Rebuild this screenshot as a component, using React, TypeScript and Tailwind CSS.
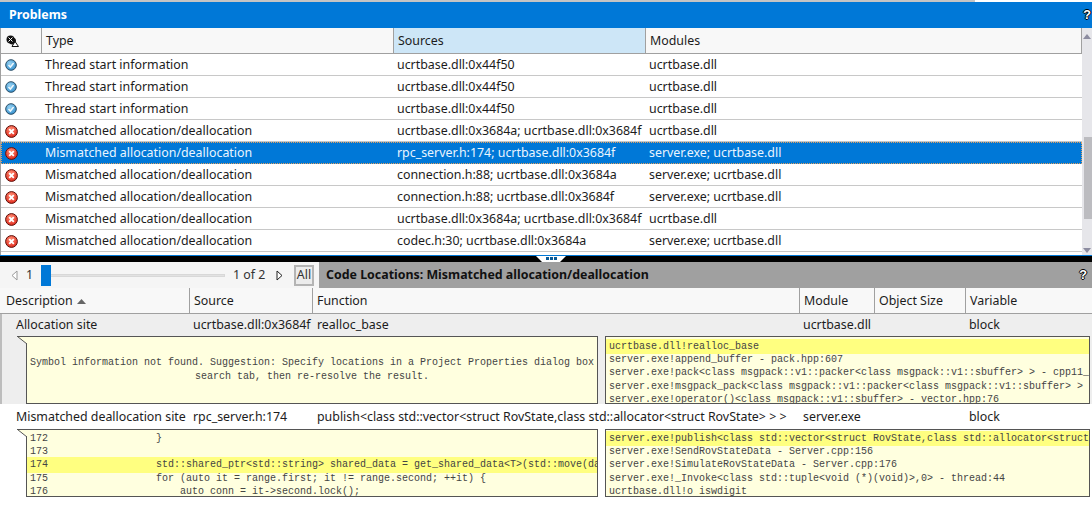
const uiFont = "[font-family:'Noto_Sans',sans-serif]";

const rows: [string, string, string, string][] = [
  ["info", "Thread start information", "ucrtbase.dll:0x44f50", "ucrtbase.dll"],
  ["info", "Thread start information", "ucrtbase.dll:0x44f50", "ucrtbase.dll"],
  ["info", "Thread start information", "ucrtbase.dll:0x44f50", "ucrtbase.dll"],
  ["err", "Mismatched allocation/deallocation", "ucrtbase.dll:0x3684a; ucrtbase.dll:0x3684f", "ucrtbase.dll"],
  ["err", "Mismatched allocation/deallocation", "rpc_server.h:174; ucrtbase.dll:0x3684f", "server.exe; ucrtbase.dll"],
  ["err", "Mismatched allocation/deallocation", "connection.h:88; ucrtbase.dll:0x3684a", "server.exe; ucrtbase.dll"],
  ["err", "Mismatched allocation/deallocation", "connection.h:88; ucrtbase.dll:0x3684f", "server.exe; ucrtbase.dll"],
  ["err", "Mismatched allocation/deallocation", "ucrtbase.dll:0x3684a; ucrtbase.dll:0x3684f", "ucrtbase.dll"],
  ["err", "Mismatched allocation/deallocation", "codec.h:30; ucrtbase.dll:0x3684a", "server.exe; ucrtbase.dll"],
];

function InfoIcon() {
  return (
    <svg width="12" height="12" viewBox="0 0 12 12">
      <defs>
        <radialGradient id="ig" cx="0.4" cy="0.35" r="0.7">
          <stop offset="0" stopColor="#9ad4f4" />
          <stop offset="1" stopColor="#2f8ccb" />
        </radialGradient>
      </defs>
      <circle cx="6" cy="6" r="5.3" fill="url(#ig)" stroke="#2b4f68" strokeWidth="1" />
      <path d="M3.5 6 L5.4 8 L8.6 4" fill="none" stroke="#eef8fe" strokeWidth="1.5" />
    </svg>
  );
}

function ErrIcon() {
  return (
    <svg width="13" height="13" viewBox="0 0 13 13">
      <defs>
        <radialGradient id="eg" cx="0.45" cy="0.3" r="0.8">
          <stop offset="0" stopColor="#ff8a70" />
          <stop offset="1" stopColor="#dd1f14" />
        </radialGradient>
      </defs>
      <circle cx="6.5" cy="6.5" r="5.9" fill="url(#eg)" stroke="#5c120c" strokeWidth="1" />
      <path d="M4.2 4.2 L8.8 8.8 M8.8 4.2 L4.2 8.8" fill="none" stroke="#ffffff" strokeWidth="1.9" />
    </svg>
  );
}

function Help() {
  return (
    <span className="font-bold text-[13px] leading-none text-white [font-family:'Liberation_Mono',monospace] [text-shadow:1px_0_0_#000,-1px_0_0_#000,0_1px_0_#000,0_-1px_0_#000]">
      ?
    </span>
  );
}

function Tail({ h }: { h: number }) {
  return (
    <svg className="absolute top-[-1px] left-[-10px]" width="11" height={h} viewBox={`0 0 11 ${h}`}>
      <path d={`M0 0.5 L10.5 0.5 L10.5 ${h - 1} Z`} fill="#ffffdf" />
      <path d={`M0.5 0.5 L10 ${h - 1} M0 0.5 L11 0.5`} stroke="#555" fill="none" />
    </svg>
  );
}

function Panel({ className, children, tail }: { className: string; children: React.ReactNode; tail?: boolean }) {
  return (
    <div className={`relative border border-[#555] bg-[#ffffdf] ${className}`}>
      {tail && <Tail h={9} />}
      <div className="w-full h-full overflow-hidden flex flex-col">{children}</div>
    </div>
  );
}

function CodeLine({ text, hl }: { text: string; hl?: boolean }) {
  return (
    <div
      className={`shrink-0 whitespace-pre overflow-hidden pl-[3px] ${
        hl ? "h-[15.2px] leading-[15.2px] -my-[1px] bg-[#ffff80]" : "h-[13.2px] leading-[13.2px]"
      }`}
    >
      {text}
    </div>
  );
}

const cols2 = "grid grid-cols-[190px_123px_487px_75px_91px_1fr]";
const lineB = "shadow-[inset_0_-1px_0_#a0a0a0]";

export default function App() {
  return (
    <div className={`w-[1092px] h-[508px] overflow-hidden flex flex-col bg-white text-[12.4px] text-[#1c1c1c] ${uiFont}`}>
      <div className="h-[2px] flex shrink-0">
        <div className="w-[975px] bg-[#c4c4c4]" />
        <div className="flex-1 bg-white" />
      </div>
      <div className="h-[26px] shrink-0 bg-[#0078d7] flex items-center justify-between pl-[9px] pr-[1px] text-white font-bold">
        <span>Problems</span>
        <Help />
      </div>

      <div className="h-[227px] shrink-0 flex border-l border-[#a0a0a0]">
        <div className="w-[1081px] flex flex-col">
          <div className={`h-[26px] shrink-0 grid grid-cols-[41px_352px_252px_1fr] bg-[#f8f8f8] ${lineB} border-r border-[#a0a0a0]`}>
            <div className="flex items-center pl-[5px] border-r border-[#a0a0a0]">
              <svg width="13" height="12" viewBox="0 0 13 12">
                <circle cx="4.5" cy="4.5" r="4" fill="#111" />
                <circle cx="6.5" cy="6" r="3.5" fill="#111" />
                <path d="M2.5 2.5 L6.5 6.5 M6.5 2.5 L2.5 6.5" stroke="#fff" strokeWidth="1" />
                <path d="M9 6.5 L12.5 11.5 L6 11.5 Z" fill="#fff" stroke="#111" strokeWidth="1" />
              </svg>
            </div>
            <div className="flex items-center pl-[4px] border-r border-[#a0a0a0]">Type</div>
            <div className="flex items-center pl-[4px] bg-[#cde6f7] border-r border-[#a0a0a0] shadow-[inset_0_-1px_0_#a0a0a0]">Sources</div>
            <div className="flex items-center pl-[4px]">Modules</div>
          </div>
          {rows.map((r, i) => {
            const sel = i === 4;
            return (
              <div
                key={i}
                className={`h-[22px] shrink-0 grid grid-cols-[41px_352px_252px_1fr] items-center ${
                  sel
                    ? "bg-[#0078d7] text-[#eaf5ff] outline-1 outline-dotted -outline-offset-1 outline-[#e0a060]"
                    : "shadow-[inset_0_-1px_0_#c8c8c8]"
                }`}
              >
                <div className="flex pl-[4px]">{r[0] === "info" ? <InfoIcon /> : <ErrIcon />}</div>
                <div className="pl-[3px] whitespace-nowrap">{r[1]}</div>
                <div className="pl-[3px] whitespace-nowrap">{r[2]}</div>
                <div className="pl-[3px] whitespace-nowrap">{r[3]}</div>
              </div>
            );
          })}
        </div>
        <div className="flex-1 bg-[#e6e6ea] flex flex-col items-end relative">
          <svg className="mt-[6px] mr-[1px]" width="8" height="5" viewBox="0 0 8 5">
            <path d="M0 5 L4 0 L8 5 Z" fill="#8c8ca0" />
          </svg>
          <div className="mt-[98px] w-[8px] h-[82px] bg-[#bcbcc0]" />
          <svg className="mt-[29px] mr-[1px]" width="8" height="5" viewBox="0 0 8 5">
            <path d="M0 0 L8 0 L4 5 Z" fill="#8c8ca0" />
          </svg>
        </div>
      </div>

      <div className="h-[1px] shrink-0 bg-[#0078d7]" />
      <div className="h-[6px] shrink-0 bg-black flex justify-center pl-[10px]">
        <div className="w-[30px] h-[6px] bg-white [clip-path:polygon(0_0,100%_0,80%_100%,20%_100%)] flex justify-center pt-[1px] gap-[1px]">
          <div className="w-[3px] h-[3px] bg-[#0a5a96]" />
          <div className="w-[3px] h-[3px] bg-[#0a5a96]" />
          <div className="w-[3px] h-[3px] bg-[#0a5a96]" />
        </div>
      </div>

      <div className="h-[26px] shrink-0 flex">
        <div className="w-[319px] bg-[#f5f5f5] flex items-center pl-[11px]">
          <svg width="7" height="11" viewBox="0 0 7 11">
            <path d="M6 1 L1 5.5 L6 10 Z" fill="#fff" stroke="#9a9a9a" />
          </svg>
          <span className="ml-[8px] w-[15px] text-[#333]">1</span>
          <div className="relative w-[184px] h-[21px] flex items-center">
            <div className="absolute left-0 top-0 w-[10px] h-[21px] bg-[#0078d7]" />
            <div className="w-full h-[3px] bg-[#e2e2e2] border border-[#d8d8d8]" />
          </div>
          <span className="ml-[8px] w-[36px] text-[#333] whitespace-nowrap">1 of 2</span>
          <svg className="ml-[7px]" width="7" height="11" viewBox="0 0 7 11">
            <path d="M1 1 L6 5.5 L1 10 Z" fill="#fff" stroke="#222" />
          </svg>
          <div className="ml-[11px] w-[20px] h-[21px] border-2 border-[#b4b4b4] bg-[#ececec] flex items-center justify-center text-[#333]">
            All
          </div>
        </div>
        <div className="flex-1 bg-[#a0a0a0] flex items-center justify-between pl-[7px] pr-[5px] font-bold text-[#111]">
          <span>Code Locations: Mismatched allocation/deallocation</span>
          <Help />
        </div>
      </div>

      <div className={`h-[26px] shrink-0 ${cols2} bg-[#f8f8f8] ${lineB}`}>
        <div className="flex items-center pl-[6px] border-r border-[#a0a0a0] gap-[4px]">
          Description
          <svg width="9" height="5" viewBox="0 0 9 5">
            <path d="M0 5 L4.5 0 L9 5 Z" fill="#666" />
          </svg>
        </div>
        <div className="flex items-center pl-[4px] border-r border-[#a0a0a0]">Source</div>
        <div className="flex items-center pl-[4px] border-r border-[#a0a0a0]">Function</div>
        <div className="flex items-center pl-[4px] border-r border-[#a0a0a0]">Module</div>
        <div className="flex items-center pl-[4px] border-r border-[#a0a0a0]">Object Size</div>
        <div className="flex items-center pl-[4px]">Variable</div>
      </div>

      <div className="h-[90px] shrink-0 bg-[#eeeeee] border-l-2 border-[#bdbdbd] flex flex-col">
        <div className={`h-[22px] shrink-0 ${cols2} items-center -ml-[2px]`}>
          <div className="pl-[16px]">Allocation site</div>
          <div className="pl-[3px] whitespace-nowrap">ucrtbase.dll:0x3684f</div>
          <div className="pl-[4px]">realloc_base</div>
          <div className="pl-[3px]">ucrtbase.dll</div>
          <div />
          <div className="pl-[3px]">block</div>
        </div>
        <div className="flex flex-1 pl-[24px] text-[10px] text-[#444] [font-family:'Liberation_Mono',monospace]">
          <Panel tail className="w-[572px] h-[68px]">
            <div className="h-full flex flex-col justify-center items-center leading-[14px] whitespace-pre">
              <div>Symbol information not found. Suggestion: Specify locations in a Project Properties dialog box</div>
              <div>search tab, then re-resolve the result.</div>
            </div>
          </Panel>
          <Panel className="ml-[7px] w-[485px] h-[68px]">
            <div className="pt-[3px]">
              <CodeLine hl text="ucrtbase.dll!realloc_base" />
              <CodeLine text="server.exe!append_buffer - pack.hpp:607" />
              <CodeLine text="server.exe!pack<class msgpack::v1::packer<class msgpack::v1::sbuffer> > - cpp11_msgpack_tuple.hpp" />
              <CodeLine text="server.exe!msgpack_pack<class msgpack::v1::packer<class msgpack::v1::sbuffer> > - adaptor_base.hpp" />
              <CodeLine text="server.exe!operator()<class msgpack::v1::sbuffer> - vector.hpp:76" />
            </div>
          </Panel>
        </div>
      </div>

      <div className="flex-1 bg-white flex flex-col">
        <div className={`h-[25px] shrink-0 pt-[2px] ${cols2} items-center`}>
          <div className="pl-[16px] whitespace-nowrap">Mismatched deallocation site</div>
          <div className="pl-[3px] whitespace-nowrap">rpc_server.h:174</div>
          <div className="pl-[4px] whitespace-nowrap">publish&lt;class std::vector&lt;struct RovState,class std::allocator&lt;struct RovState&gt; &gt; &gt;</div>
          <div className="pl-[3px]">server.exe</div>
          <div />
          <div className="pl-[3px]">block</div>
        </div>
        <div className="flex pl-[26px] text-[10px] text-[#444] [font-family:'Liberation_Mono',monospace]">
          <Panel tail className="w-[572px] h-[68px]">
            <div className="pt-[2px]">
              <CodeLine text="172                  }" />
              <CodeLine text="173" />
              <CodeLine hl text="174                  std::shared_ptr<std::string> shared_data = get_shared_data<T>(std::move(data));" />
              <CodeLine text="175                  for (auto it = range.first; it != range.second; ++it) {" />
              <CodeLine text="176                      auto conn = it->second.lock();" />
            </div>
          </Panel>
          <Panel className="ml-[7px] w-[485px] h-[68px]">
            <div className="pt-[2px]">
              <CodeLine hl text="server.exe!publish<class std::vector<struct RovState,class std::allocator<struct RovState> > >" />
              <CodeLine text="server.exe!SendRovStateData - Server.cpp:156" />
              <CodeLine text="server.exe!SimulateRovStateData - Server.cpp:176" />
              <CodeLine text="server.exe!_Invoke<class std::tuple<void (*)(void)>,0> - thread:44" />
              <CodeLine text="ucrtbase.dll!o iswdigit" />
            </div>
          </Panel>
        </div>
      </div>
    </div>
  );
}
